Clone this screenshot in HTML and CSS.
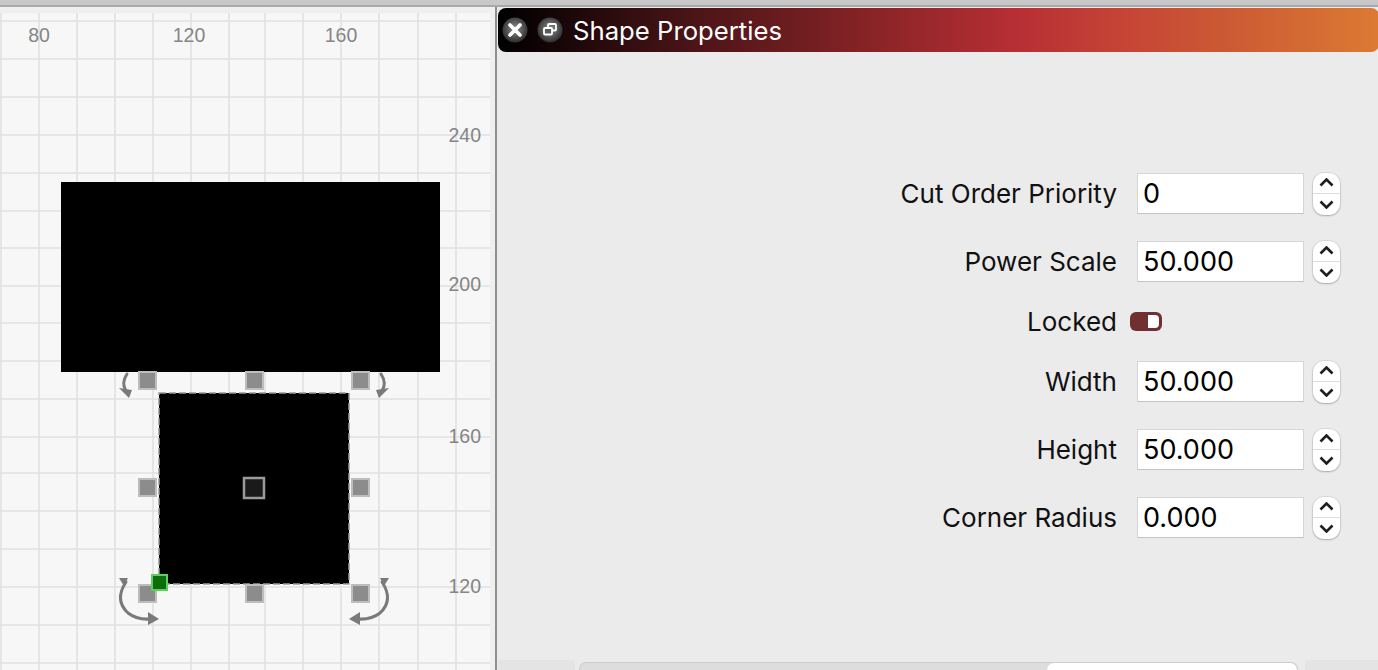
FILE: index.html
```html
<!DOCTYPE html>
<html>
<head>
<meta charset="utf-8">
<title>Shape Properties</title>
<link rel="stylesheet" href="styles.css">
</head>
<body>
<div class="topbar"></div>
<div class="main">
  <div class="canvas">
    <svg class="canvas-svg" width="490" height="663" viewBox="0 7 490 663" xmlns="http://www.w3.org/2000/svg">
      <rect x="0" y="7" width="490" height="663" fill="#efefef"/>
      <rect x="0" y="13" width="490" height="657" fill="#f7f7f7"/>
      <g stroke="#e0e0e0" stroke-width="1.6">
        <line x1="1" y1="13" x2="1" y2="670"/>
        <line x1="39" y1="13" x2="39" y2="670"/>
        <line x1="77" y1="13" x2="77" y2="670"/>
        <line x1="115" y1="13" x2="115" y2="670"/>
        <line x1="153" y1="13" x2="153" y2="670"/>
        <line x1="191" y1="13" x2="191" y2="670"/>
        <line x1="229" y1="13" x2="229" y2="670"/>
        <line x1="265" y1="13" x2="265" y2="670"/>
        <line x1="303" y1="13" x2="303" y2="670"/>
        <line x1="341" y1="13" x2="341" y2="670"/>
        <line x1="379" y1="13" x2="379" y2="670"/>
        <line x1="418" y1="13" x2="418" y2="670"/>
        <line x1="456" y1="13" x2="456" y2="670"/>
        <line x1="0" y1="21" x2="490" y2="21"/>
        <line x1="0" y1="59" x2="490" y2="59"/>
        <line x1="0" y1="97" x2="490" y2="97"/>
        <line x1="0" y1="135" x2="490" y2="135"/>
        <line x1="0" y1="173" x2="490" y2="173"/>
        <line x1="0" y1="211" x2="490" y2="211"/>
        <line x1="0" y1="248" x2="490" y2="248"/>
        <line x1="0" y1="286" x2="490" y2="286"/>
        <line x1="0" y1="323" x2="490" y2="323"/>
        <line x1="0" y1="361" x2="490" y2="361"/>
        <line x1="0" y1="399" x2="490" y2="399"/>
        <line x1="0" y1="437" x2="490" y2="437"/>
        <line x1="0" y1="473" x2="490" y2="473"/>
        <line x1="0" y1="511" x2="490" y2="511"/>
        <line x1="0" y1="549" x2="490" y2="549"/>
        <line x1="0" y1="587" x2="490" y2="587"/>
        <line x1="0" y1="625" x2="490" y2="625"/>
        <line x1="0" y1="663" x2="490" y2="663"/>
      </g>
      <g class="ruler-text" fill="#858585">
        <text x="39" y="42" text-anchor="middle">80</text>
        <text x="189" y="42" text-anchor="middle">120</text>
        <text x="341" y="42" text-anchor="middle">160</text>
        <text x="481" y="142" text-anchor="end">240</text>
        <text x="481" y="291" text-anchor="end">200</text>
        <text x="481" y="443" text-anchor="end">160</text>
        <text x="481" y="593" text-anchor="end">120</text>
      </g>
      <!-- shapes -->
      <rect x="61" y="182" width="379" height="190" fill="#000"/>
      <rect x="159" y="393" width="190" height="191" fill="#000"/>
      <rect x="159" y="393" width="190" height="191" fill="none" stroke="#9a9a9a" stroke-width="1.5" stroke-dasharray="7 3"/>
      <!-- rotation arrows -->
      <g fill="none" stroke="#7a7a7a" stroke-width="3" stroke-linecap="round">
        <path d="M127 374 Q121 383 126 391"/>
        <path d="M381 374 Q387 383 382 391"/>
        <path d="M126 582 Q114 600 128 613 Q137 620 150 619"/>
        <path d="M382 582 Q394 600 380 613 Q371 620 358 619"/>
      </g>
      <g fill="#7a7a7a">
        <polygon points="119,388 132,390 129,398"/>
        <polygon points="389,388 376,390 379,398"/>
        <polygon points="148,612 159,619 148,625"/>
        <polygon points="360,612 349,619 360,625"/>
        <polygon points="119,578 128,578 124,586"/>
        <polygon points="389,578 380,578 384,586"/>
      </g>
      <!-- handles -->
      <g fill="#8c8c8c" stroke="#bdbdbd" stroke-width="2">
        <rect x="139" y="372" width="17" height="17"/>
        <rect x="246" y="372" width="17" height="17"/>
        <rect x="352" y="372" width="17" height="17"/>
        <rect x="139" y="479" width="17" height="17"/>
        <rect x="352" y="479" width="17" height="17"/>
        <rect x="139" y="585" width="17" height="17"/>
        <rect x="246" y="585" width="17" height="17"/>
        <rect x="352" y="585" width="17" height="17"/>
      </g>
      <rect x="244" y="478" width="20" height="20" fill="#1a1a1a" stroke="#9a9a9a" stroke-width="2.5"/>
      <rect x="152" y="575" width="15" height="15" fill="#0b6e0b" stroke="#5fce5f" stroke-width="2"/>
    </svg>
  </div>
  <div class="divider"></div>
  <div class="panel">
    <div class="header">
      <span class="hbtn">
        <svg width="26" height="26" viewBox="-13 -13 26 26">
          <defs>
            <radialGradient id="bg1" cx="50%" cy="45%" r="55%">
              <stop offset="0%" stop-color="#8e8e8e"/>
              <stop offset="100%" stop-color="#2e2e2e"/>
            </radialGradient>
          </defs>
          <circle r="12.5" fill="url(#bg1)"/>
          <path d="M-5 -5 L5 5 M5 -5 L-5 5" stroke="#fff" stroke-width="3.6" stroke-linecap="round"/>
        </svg>
      </span>
      <span class="hbtn">
        <svg width="26" height="26" viewBox="-13 -13 26 26">
          <defs>
            <radialGradient id="bg2" cx="50%" cy="45%" r="55%">
              <stop offset="0%" stop-color="#8e8e8e"/>
              <stop offset="100%" stop-color="#2e2e2e"/>
            </radialGradient>
          </defs>
          <circle r="12.5" fill="url(#bg2)"/>
          <rect x="-2" y="-6" width="8" height="6.5" rx="1" fill="none" stroke="#fff" stroke-width="1.8"/>
          <rect x="-6" y="-2" width="8" height="6.5" rx="1" fill="#5a5a5a" stroke="#fff" stroke-width="1.8"/>
        </svg>
      </span>
      <span class="title">Shape Properties</span>
    </div>
    <div class="form">
      <label class="lbl">Cut Order Priority</label>
      <div class="input">0</div>
      <div class="stepper">
        <span class="half"><svg width="15" height="9" viewBox="0 0 15 9"><polyline points="1.5,7.5 7.5,1.5 13.5,7.5" fill="none" stroke="#1e1e1e" stroke-width="2.6"/></svg></span>
        <span class="half bottom"><svg width="15" height="9" viewBox="0 0 15 9"><polyline points="1.5,1.5 7.5,7.5 13.5,1.5" fill="none" stroke="#1e1e1e" stroke-width="2.6"/></svg></span>
      </div>

      <label class="lbl">Power Scale</label>
      <div class="input">50.000</div>
      <div class="stepper">
        <span class="half"><svg width="15" height="9" viewBox="0 0 15 9"><polyline points="1.5,7.5 7.5,1.5 13.5,7.5" fill="none" stroke="#1e1e1e" stroke-width="2.6"/></svg></span>
        <span class="half bottom"><svg width="15" height="9" viewBox="0 0 15 9"><polyline points="1.5,1.5 7.5,7.5 13.5,1.5" fill="none" stroke="#1e1e1e" stroke-width="2.6"/></svg></span>
      </div>

      <label class="lbl">Locked</label>
      <div class="switch-cell"><span class="switch"></span></div>
      <div></div>

      <label class="lbl">Width</label>
      <div class="input">50.000</div>
      <div class="stepper">
        <span class="half"><svg width="15" height="9" viewBox="0 0 15 9"><polyline points="1.5,7.5 7.5,1.5 13.5,7.5" fill="none" stroke="#1e1e1e" stroke-width="2.6"/></svg></span>
        <span class="half bottom"><svg width="15" height="9" viewBox="0 0 15 9"><polyline points="1.5,1.5 7.5,7.5 13.5,1.5" fill="none" stroke="#1e1e1e" stroke-width="2.6"/></svg></span>
      </div>

      <label class="lbl">Height</label>
      <div class="input">50.000</div>
      <div class="stepper">
        <span class="half"><svg width="15" height="9" viewBox="0 0 15 9"><polyline points="1.5,7.5 7.5,1.5 13.5,7.5" fill="none" stroke="#1e1e1e" stroke-width="2.6"/></svg></span>
        <span class="half bottom"><svg width="15" height="9" viewBox="0 0 15 9"><polyline points="1.5,1.5 7.5,7.5 13.5,1.5" fill="none" stroke="#1e1e1e" stroke-width="2.6"/></svg></span>
      </div>

      <label class="lbl">Corner Radius</label>
      <div class="input">0.000</div>
      <div class="stepper">
        <span class="half"><svg width="15" height="9" viewBox="0 0 15 9"><polyline points="1.5,7.5 7.5,1.5 13.5,7.5" fill="none" stroke="#1e1e1e" stroke-width="2.6"/></svg></span>
        <span class="half bottom"><svg width="15" height="9" viewBox="0 0 15 9"><polyline points="1.5,1.5 7.5,7.5 13.5,1.5" fill="none" stroke="#1e1e1e" stroke-width="2.6"/></svg></span>
      </div>
    </div>
    <div class="footer">
      <div class="foot-side"></div>
      <div class="foot-bar"><div class="foot-white"></div></div>
      <div class="foot-side right"></div>
    </div>
  </div>
</div>
</body>
</html>
```

FILE: styles.css
```css
html, body {
  margin: 0;
  padding: 0;
}
body {
  width: 1378px;
  height: 670px;
  overflow: hidden;
  background: #ebebeb;
  font-family: Inter, "Liberation Sans", sans-serif;
}
.topbar {
  height: 5px;
  background: #c8c8c8;
  border-bottom: 2px solid #a9a9a9;
}
.main {
  display: flex;
  height: 663px;
}
.canvas {
  width: 490px;
  height: 663px;
  flex: none;
}
.canvas-svg {
  display: block;
}
.ruler-text {
  font-family: "Liberation Sans", Arial, sans-serif;
  font-size: 19.5px;
}
.divider {
  width: 5px;
  flex: none;
  background: #efefef;
  border-right: 2px solid #8f8f8f;
}
.panel {
  flex: 1;
  display: flex;
  flex-direction: column;
  padding-top: 1px;
  padding-left: 1px;
  background: #ebebeb;
}
.header {
  height: 44px;
  border-radius: 8px;
  display: flex;
  align-items: center;
  padding-left: 4px;
  gap: 9px;
  background: linear-gradient(90deg, #000000 0%, #0a0203 3%, #4a1417 21.8%, #8b2427 43.4%, #b82f34 59.3%, #c64636 72%, #cc5a33 83%, #dc7a33 100%);
}
.hbtn {
  display: flex;
  width: 26px;
  height: 26px;
}
.title {
  color: #ffffff;
  font-size: 25.7px;
  margin-left: 1px;
}
.form {
  display: grid;
  grid-template-columns: auto 176px 27px;
  grid-template-rows: 41px 41px 25px 41px 41px 41px;
  justify-content: end;
  align-items: center;
  row-gap: 27px;
  padding-top: 121px;
  padding-right: 39px;
}
.lbl {
  font-size: 26px;
  line-height: 25px;
  color: #111;
  text-align: right;
  margin-right: 20px;
  white-space: nowrap;
}
.input {
  height: 41px;
  box-sizing: border-box;
  background: #fff;
  border: 1px solid #d6d6d6;
  border-bottom-color: #c4c4c4;
  font-size: 27px;
  color: #000;
  padding-left: 5px;
  line-height: 39px;
  margin-right: 9px;
}
.stepper {
  width: 27px;
  height: 42px;
  box-sizing: border-box;
  background: #fff;
  border-radius: 11px;
  box-shadow: 0 0 0 1px rgba(0,0,0,0.07), 0 1px 2px rgba(0,0,0,0.22);
  display: flex;
  flex-direction: column;
  overflow: hidden;
}
.half {
  flex: 1;
  display: flex;
  align-items: center;
  justify-content: center;
}
.half.bottom {
  border-top: 1px solid #dedede;
}
.switch-cell {
  height: 25px;
  display: flex;
  align-items: center;
}
.switch {
  position: relative;
  display: block;
  width: 32px;
  height: 19px;
  margin-left: -7px;
  border-radius: 6px;
  background: #702f30;
}
.switch::after {
  content: "";
  position: absolute;
  right: 3px;
  top: 3px;
  bottom: 3px;
  width: 11px;
  background: #ffffff;
  border-radius: 0 4px 4px 0;
}
.footer {
  margin-top: auto;
  height: 10px;
  display: flex;
}
.foot-side {
  width: 77px;
  background: #e4e4e4;
}
.foot-side.right {
  width: 74px;
  margin-left: 7px;
}
.foot-bar {
  margin-left: 4px;
  margin-top: 2px;
  width: 719px;
  background: #dddddd;
  border: 1px solid #cdcdcd;
  border-bottom: none;
  border-radius: 7px 7px 0 0;
  display: flex;
  justify-content: flex-end;
  box-sizing: border-box;
}
.foot-white {
  width: 250px;
  background: #ffffff;
  border-radius: 7px 7px 0 0;
}
```
